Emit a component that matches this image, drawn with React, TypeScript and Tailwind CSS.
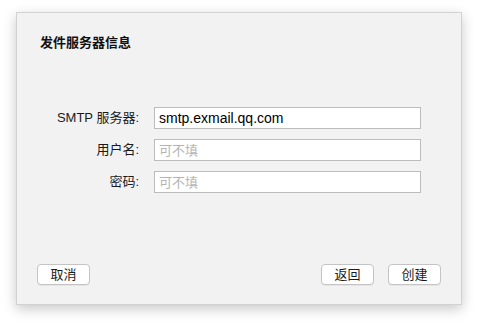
const font = {
  fontFamily: '"Liberation Sans", "Noto Sans CJK SC", sans-serif',
};

function Field({ label, value, placeholder }: { label: string; value?: string; placeholder?: string }) {
  return (
    <div className="flex items-center h-[22px]">
      <label className="w-[99px] text-right text-[13px] text-[#1a1a1a]">{label}</label>
      <div className="ml-[15px] w-[267px] h-[22px] bg-white border border-[#bcbcbc] flex items-center px-[4px]">
        {value ? (
          <span className="text-[14px] text-black leading-none">{value}</span>
        ) : (
          <span className="text-[13px] text-[#b4b4b4] leading-none">{placeholder}</span>
        )}
      </div>
    </div>
  );
}

function Button({ children }: { children: React.ReactNode }) {
  return (
    <button className="w-[53px] h-[21px] bg-white border border-[#c4c4c4] rounded-[4px] text-[13px] text-[#1a1a1a] flex items-center justify-center shadow-[0_1px_0_rgba(0,0,0,0.05)]">
      {children}
    </button>
  );
}

export default function App() {
  return (
    <div className="w-[478px] h-[326px] bg-white pl-[16px] pt-[12px]" style={font}>
      <div className="w-[446px] h-[293px] bg-[#f2f2f2] border border-[#d2d2d2] shadow-[0_4px_12px_rgba(0,0,0,0.22)] flex flex-col">
        <h1 className="pl-[23px] pt-[22px] text-[13px] font-bold text-[#111] leading-[16px]">发件服务器信息</h1>
        <div className="mt-[56px] flex flex-col gap-[10px] pl-[23px]">
          <Field label="SMTP 服务器:" value="smtp.exmail.qq.com" />
          <Field label="用户名:" placeholder="可不填" />
          <Field label="密码:" placeholder="可不填" />
        </div>
        <div className="mt-auto mb-[19px] px-[20px] flex items-center">
          <Button>取消</Button>
          <div className="ml-auto flex gap-[14px]">
            <Button>返回</Button>
            <Button>创建</Button>
          </div>
        </div>
      </div>
    </div>
  );
}
